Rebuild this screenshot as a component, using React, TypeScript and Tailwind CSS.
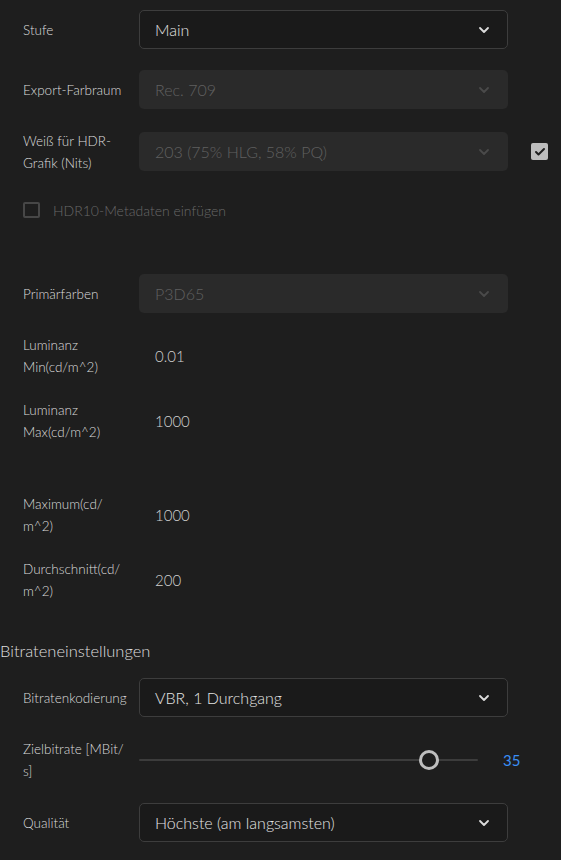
import { ChevronDown, Check } from "lucide-react";

const font = { fontFamily: "Lato, 'Open Sans', sans-serif" };

function Label({ lines }: { lines: string[] }) {
  return (
    <div className="w-[116px] shrink-0 text-[13.5px] leading-[22px] text-[#dcdcdc]">
      {lines.map((l) => (
        <div key={l}>{l}</div>
      ))}
    </div>
  );
}

function Select({ value, disabled }: { value: string; disabled?: boolean }) {
  return (
    <div
      className={
        disabled
          ? "flex h-full w-[369px] items-center justify-between rounded-[5px] bg-[#2a2a2a] pl-4 pr-4 text-[16px] text-[#606060]"
          : "flex h-full w-[369px] items-center justify-between rounded-[5px] border border-[#3d3d3d] bg-[#1a1a1a] pl-[15px] pr-[15px] text-[16px] text-[#e4e4e4]"
      }
    >
      <span>{value}</span>
      <ChevronDown
        className={disabled ? "h-4 w-4 text-[#4a4a4a]" : "h-4 w-4 text-[#dcdcdc]"}
        strokeWidth={2.75}
      />
    </div>
  );
}

function Value({ v }: { v: string }) {
  return <div className="pl-4 text-[15px] text-[#d2d2d2]">{v}</div>;
}

export default function App() {
  return (
    <main className="min-h-screen w-[561px] bg-[#1e1e1e] pb-4 pt-[10px] font-light" style={font}>
      <div className="flex h-[39px] items-center pl-[23px]">
        <Label lines={["Stufe"]} />
        <Select value="Main" />
      </div>

      <div className="mt-[21px] flex h-[39px] items-center pl-[23px]">
        <Label lines={["Export-Farbraum"]} />
        <Select value="Rec. 709" disabled />
      </div>

      <div className="mt-[23px] flex h-[39px] items-center pl-[23px]">
        <Label lines={["Weiß für HDR-", "Grafik (Nits)"]} />
        <Select value="203 (75% HLG, 58% PQ)" disabled />
        <div className="ml-[23px] flex h-[17px] w-[17px] items-center justify-center rounded-[2px] bg-[#bdbdbd]">
          <Check className="h-3 w-3 text-[#1e1e1e]" strokeWidth={4} />
        </div>
      </div>

      <div className="mt-[19px] flex h-[40px] items-center gap-[13px] pl-[23px]">
        <div className="h-[16px] w-[17px] rounded-[2px] border-2 border-[#474747]" />
        <span className="text-[14px] text-[#686868]">HDR10-Metadaten einfügen</span>
      </div>

      <div className="mt-[44px] flex h-[39px] items-center pl-[23px]">
        <Label lines={["Primärfarben"]} />
        <Select value="P3D65" disabled />
      </div>

      <div className="mt-[21px] flex h-[44px] items-center pl-[23px]">
        <Label lines={["Luminanz", "Min(cd/m^2)"]} />
        <Value v="0.01" />
      </div>

      <div className="mt-[21px] flex h-[44px] items-center pl-[23px]">
        <Label lines={["Luminanz", "Max(cd/m^2)"]} />
        <Value v="1000" />
      </div>

      <div className="mt-[50px] flex h-[44px] items-center pl-[23px]">
        <Label lines={["Maximum(cd/", "m^2)"]} />
        <Value v="1000" />
      </div>

      <div className="mt-[21px] flex h-[44px] items-center pl-[23px]">
        <Label lines={["Durchschnitt(cd/", "m^2)"]} />
        <Value v="200" />
      </div>

      <div className="mt-[38px] flex h-[22px] items-center text-[16.5px] text-[#dedede]">
        Bitrateneinstellungen
      </div>

      <div className="mt-[16px] flex h-[39px] items-center pl-[23px]">
        <Label lines={["Bitratenkodierung"]} />
        <Select value="VBR, 1 Durchgang" />
      </div>

      <div className="mt-[21px] flex h-[44px] items-center pl-[23px]">
        <Label lines={["Zielbitrate [MBit/", "s]"]} />
        <div className="relative flex h-[20px] w-[339px] items-center">
          <div className="h-[2px] w-full rounded-full bg-[#3c3c3c]" />
          <div className="absolute left-[280px] top-0 h-[20px] w-[20px] rounded-full border-[3px] border-[#bfbfbf] bg-[#1e1e1e]" />
        </div>
        <span className="ml-[25px] text-[15px] font-normal text-[#3a8ef5]">35</span>
      </div>

      <div className="mt-[21px] flex h-[39px] items-center pl-[23px]">
        <Label lines={["Qualität"]} />
        <Select value="Höchste (am langsamsten)" />
      </div>
    </main>
  );
}
